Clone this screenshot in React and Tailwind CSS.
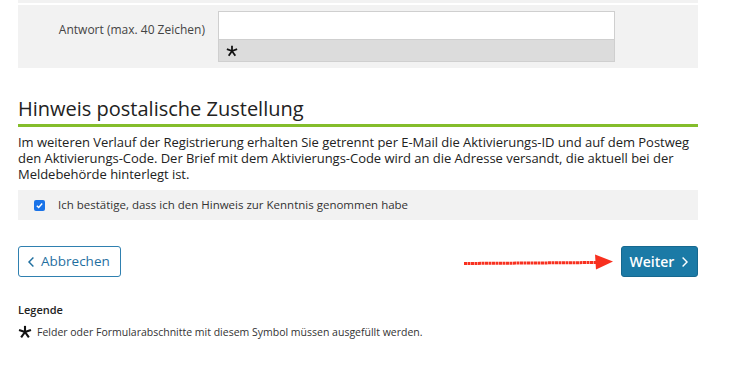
import React from "react";

function Star({ className }) {
  return (
    <svg viewBox="0 0 16 16" className={className} aria-hidden="true">
      <g stroke="#111" strokeWidth="2.4" strokeLinecap="butt">
        <line x1="8" y1="1" x2="8" y2="8.5" />
        <line x1="8" y1="8" x2="1.2" y2="5.6" />
        <line x1="8" y1="8" x2="14.8" y2="5.6" />
        <line x1="8" y1="8" x2="3.6" y2="14.2" />
        <line x1="8" y1="8" x2="12.4" y2="14.2" />
      </g>
    </svg>
  );
}

export default function App() {
  return (
    <div
      className="w-[750px] h-[367px] bg-white text-[#333] overflow-hidden"
      style={{ fontFamily: '"Open Sans", "Noto Sans", sans-serif' }}
    >
      <div className="mx-[18px] w-[680px]">
        <div className="h-[3px] bg-[#f2f2f2]" />
        <div className="mt-[2px] bg-[#f2f2f2] h-[63px] flex items-start pt-[6px]">
          <div className="w-[187px] text-right text-[12px] leading-[16px] pt-[11px] text-[#444]">
            Antwort (max. 40 Zeichen)
          </div>
          <div className="ml-[13px] w-[397px]">
            <div className="h-[29px] bg-white border border-[#cfcfcf]" />
            <div className="h-[22px] bg-[#dcdcdc] border border-t-0 border-[#cfcfcf] flex items-center pl-[7px]">
              <Star className="w-[12px] h-[12px]" />
            </div>
          </div>
        </div>

        <h2 className="mt-[27px] text-[20px] leading-[28px] text-[#222]">
          Hinweis postalische Zustellung
        </h2>
        <div className="mt-[1px] h-[3px] bg-[#84bd2b]" />
        <p className="mt-[7px] text-[13px] leading-[16px] text-[#222] tracking-[-0.03px]">
          Im weiteren Verlauf der Registrierung erhalten Sie getrennt per E-Mail die Aktivierungs-ID und auf dem Postweg den Aktivierungs-Code. Der Brief mit dem Aktivierungs-Code wird an die Adresse versandt, die aktuell bei der Meldebehörde hinterlegt ist.
        </p>
        <div className="mt-[8px] h-[30px] bg-[#f2f2f2] flex items-center pl-[16px]">
          <span className="w-[11px] h-[11px] rounded-[2px] bg-[#1a73e8] flex items-center justify-center">
            <svg viewBox="0 0 10 10" className="w-[9px] h-[9px]">
              <path d="M2 5.2 L4.1 7.2 L8 2.8" fill="none" stroke="white" strokeWidth="1.6" />
            </svg>
          </span>
          <span className="ml-[13px] text-[11.5px] text-[#333]">
            Ich bestätige, dass ich den Hinweis zur Kenntnis genommen habe
          </span>
        </div>

        <div className="mt-[26px] flex items-center">
          <button className="h-[31px] w-[103px] border border-[#2f80b0] rounded-[3px] text-[#1f6f9f] text-[13.5px] flex items-center pl-[8px] gap-[6px]">
            <svg viewBox="0 0 10 14" className="w-[8px] h-[12px]">
              <path d="M8 1.5 L2.5 7 L8 12.5" fill="none" stroke="#1f6f9f" strokeWidth="1.8" />
            </svg>
            Abbrechen
          </button>
          <div className="ml-auto flex items-center">
            <svg viewBox="0 0 152 20" className="w-[152px] h-[20px] mr-[7px]">
              <path
                d="M2 11.5 L136 10.5"
                stroke="#f8301f"
                strokeWidth="3"
                strokeDasharray="3 0.5"
                fill="none"
              />
              <path d="M133 2.5 L151 9.5 L134 17.5 Z" fill="#f8301f" />
            </svg>
            <button className="h-[31px] w-[77px] bg-[#1b7aa6] border border-[#16688f] rounded-[3px] text-white text-[14px] font-semibold flex items-center justify-center gap-[7px]">
              Weiter
              <svg viewBox="0 0 10 14" className="w-[8px] h-[12px]">
                <path d="M2 1.5 L7.5 7 L2 12.5" fill="none" stroke="white" strokeWidth="1.8" />
              </svg>
            </button>
          </div>
        </div>

        <div className="mt-[25px] text-[11px] font-semibold text-[#222]">Legende</div>
        <div className="mt-[6px] flex items-center">
          <Star className="w-[14px] h-[14px]" />
          <span className="ml-[5px] text-[10.5px] text-[#333]">
            Felder oder Formularabschnitte mit diesem Symbol müssen ausgefüllt werden.
          </span>
        </div>
      </div>
    </div>
  );
}
